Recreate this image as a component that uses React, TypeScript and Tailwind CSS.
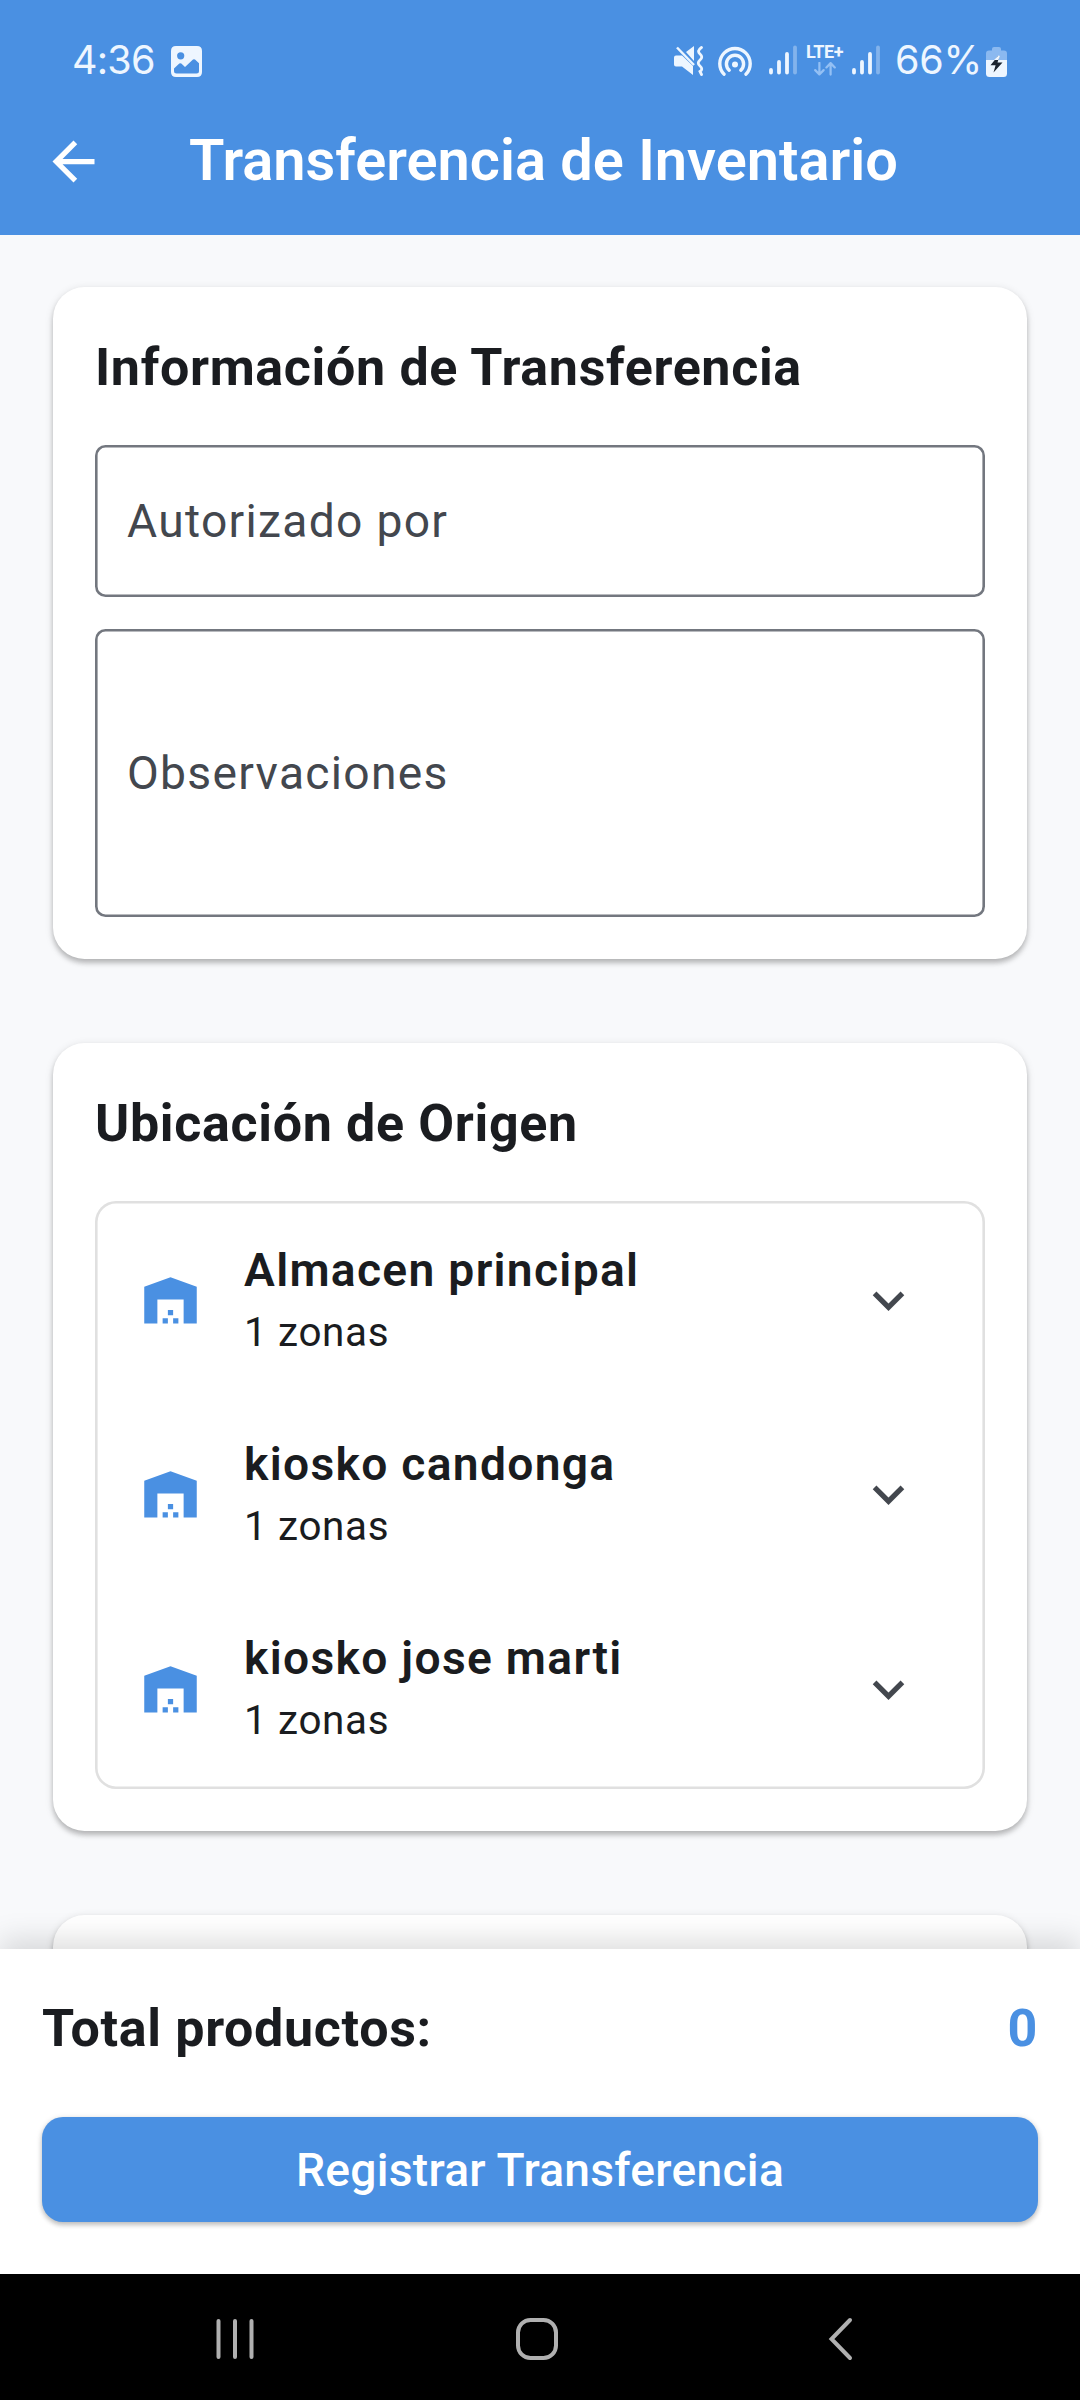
import type { ReactNode } from "react";

const locations = [
  { name: "Almacen principal", zones: "1 zonas" },
  { name: "kiosko candonga", zones: "1 zonas" },
  { name: "kiosko jose marti", zones: "1 zonas" },
];

function SignalBars() {
  return (
    <svg width="28" height="30" viewBox="0 0 28 30" stroke="#eef6ff" strokeWidth="3.8" strokeLinecap="round">
      <path d="M2 25v2.6M10 17v10.6M18 9v18.6" />
      <path d="M26 2.4v25.2" opacity="0.35" />
    </svg>
  );
}

function StatusBar() {
  return (
    <div className="flex h-[88px] items-center justify-between pt-8 pr-[73px] pl-[72px] font-['Inter',sans-serif] text-[39.5px] leading-none text-[#eef6ff]">
      <div className="flex items-center">
        <span className="w-[99px] pt-[2px] tracking-[-0.8px]">4:36</span>
        <svg className="mt-[3px]" width="31" height="31" viewBox="0 0 31 31">
          <path
            fillRule="evenodd"
            fill="#eef6ff"
            d="M5 0H26Q31 0 31 5V26Q31 31 26 31H5Q0 31 0 26V5Q0 0 5 0ZM9.7 6.2A3.6 3.6 0 1 0 9.7 13.4A3.6 3.6 0 1 0 9.7 6.2ZM3 22.5L8.3 17.6Q9.3 16.8 10.3 17.6L14 21L22 13.6Q23 12.7 24 13.6L28 17.2V25Q28 27.5 25.5 27.5H5.5Q3 27.5 3 25Z"
          />
        </svg>
      </div>
      <div className="flex items-center">
        <svg className="mt-[2px] mr-[14px]" width="30" height="30" viewBox="0 0 30 30">
          <path d="M2 9.5H8L19 20V29L8 20.5H2Q0 20.5 0 18.5V11.5Q0 9.5 2 9.5ZM12 6L20 0V15Z" fill="#eef6ff" />
          <path d="M3 1.5L20 19" stroke="#eef6ff" strokeWidth="2.5" />
          <path
            d="M27.5 1.5Q22.5 5 26 8Q29.5 11 26 14Q22.5 17 26 20Q29.5 23 26 25.5L27.5 28.5"
            fill="none"
            stroke="#eef6ff"
            strokeWidth="2.8"
            strokeLinecap="round"
          />
        </svg>
        <svg className="mt-[2px] mr-[17px]" width="34" height="31" viewBox="0 0 34 31" fill="none" stroke="#eef6ff" strokeWidth="3.4" strokeLinecap="round">
          <path d="M6 28.2A15.2 15.2 0 1 1 28 28.2" />
          <path d="M11.2 24.2A8.6 8.6 0 1 1 22.8 24.2" />
          <circle cx="17" cy="18.5" r="3" fill="#eef6ff" stroke="none" />
        </svg>
        <SignalBars />
        <div className="mx-[9px] flex h-8 w-[37px] flex-col items-center">
          <span className="font-['Roboto',sans-serif] text-[18px] leading-[16px] font-bold tracking-[-0.4px]">LTE+</span>
          <svg className="mt-[2px]" width="24" height="15" viewBox="0 0 24 15" fill="none" stroke="#94c0f4" strokeWidth="2.4" strokeLinecap="round" strokeLinejoin="round">
            <path d="M6 1V13M1.5 8.7L6 13.3L10.5 8.7M18 13.5V1.5M13.5 5.8L18 1.2L22.5 5.8" />
          </svg>
        </div>
        <SignalBars />
        <span className="ml-[15px] w-[89px] pt-[2px] whitespace-nowrap tracking-[-0.2px]">66%</span>
        <svg className="mt-[3px] ml-[2px]" width="21" height="30" viewBox="0 0 21 30">
          <path d="M6 2Q6 0 8 0H13Q15 0 15 2V3.5H18Q21 3.5 21 6.5V13H0V6.5Q0 3.5 3 3.5H6Z" fill="#8bb9f0" />
          <path d="M0 13H21V26.5Q21 30 17.5 30H3.5Q0 30 0 26.5Z" fill="#eef6ff" />
          <path d="M12 9L4.5 18.3H9.6L7.5 25.5L16.5 15.5H11.5L13.5 9Z" fill="#1b2430" />
          <path d="M12.5 8.6L8 13H12.3L14 9Z" fill="#eef6ff" />
        </svg>
      </div>
    </div>
  );
}

function Card({ title, children }: { title?: string; children?: ReactNode }) {
  return (
    <section className="rounded-[31.5px] bg-white px-[42px] pt-[44px] pb-[42px] shadow-[0_4px_5px_rgba(0,0,0,0.2),0_2px_9px_rgba(0,0,0,0.13)]">
      {title && <h2 className="text-[52px] leading-[74px] font-bold tracking-[0.66px] text-[#1a1c20]">{title}</h2>}
      {children}
    </section>
  );
}

function Field({ label, className }: { label: string; className: string }) {
  return (
    <div className={`flex items-center rounded-[10.5px] px-[32px] pt-[2px] text-[46.2px] tracking-[1.3px] text-[#43474e] shadow-[inset_0_0_0_2.6px_#73777f] ${className}`}>
      {label}
    </div>
  );
}

function LocationRow({ name, zones }: { name: string; zones: string }) {
  return (
    <div className="flex h-[194.25px] items-center pr-[65px] pl-[44px] text-[#1a1c20]">
      <svg className="size-[63px]" viewBox="0 0 24 24" fill="#4a90e2">
        <path d="M22 20.8V6.8L12 3.1L2 6.8V20.8H7V11.6H17V20.8Z" />
        <path d="M9 18.8h2v2H9zM13 18.8h2v2h-2zM11 15.6h2v2h-2z" />
      </svg>
      <div className="ml-[42px] flex-1 pb-[2px]">
        <div className="text-[46.2px] leading-[66px] font-semibold tracking-[1.3px]">{name}</div>
        <div className="text-[40.4px] leading-[60px] tracking-[0.66px]">{zones}</div>
      </div>
      <svg className="size-[63px]" viewBox="0 0 24 24" fill="#43474e">
        <path d="M16.59 8.59L12 13.17L7.41 8.59L6 10l6 6l6-6z" />
      </svg>
    </div>
  );
}

export default function App() {
  return (
    <div className="flex h-[2400px] w-[1080px] flex-col overflow-hidden bg-[#f8f9fb] font-['Roboto',sans-serif]">
      <header className="h-[235px] shrink-0 bg-[#4a90e2] text-white">
        <StatusBar />
        <div className="flex h-[147px] items-center pl-[42px]">
          <svg className="size-[63px]" viewBox="0 0 24 24" fill="#fff">
            <path d="M20 11H7.83l5.59-5.59L12 4l-8 8l8 8l1.41-1.41L7.83 13H20z" />
          </svg>
          <h1 className="ml-[84px] pb-[2px] text-[57.75px] font-semibold">Transferencia de Inventario</h1>
        </div>
      </header>

      <main className="flex min-h-0 flex-1 flex-col gap-[84px] overflow-hidden px-[53px] pt-[52px]">
        <div className="h-[672px] shrink-0">
          <Card title="Información de Transferencia">
            <Field label="Autorizado por" className="mt-[40px] h-[152px]" />
            <Field label="Observaciones" className="mt-[32px] h-[288px]" />
          </Card>
        </div>
        <div className="h-[788px] shrink-0">
          <Card title="Ubicación de Origen">
            <div className="mt-[40px] rounded-[21px] py-[2.6px] shadow-[inset_0_0_0_2.6px_#e0e0e0]">
              {locations.map((l) => (
                <LocationRow key={l.name} name={l.name} zones={l.zones} />
              ))}
            </div>
          </Card>
        </div>
        <Card>
          <div className="h-[200px]" />
        </Card>
      </main>

      <footer className="relative h-[325.5px] shrink-0 bg-white px-[42px] pt-[43px] shadow-[0_-10px_27px_rgba(0,0,0,0.13)]">
        <div className="flex items-center justify-between text-[52px] leading-[74px] font-bold tracking-[0.66px] text-[#1a1c20]">
          <span>Total productos:</span>
          <span className="text-[#4a90e2]">0</span>
        </div>
        <button className="mt-[51px] flex h-[105px] w-full items-center justify-center rounded-[21px] bg-[#4a90e2] pt-[3px] text-[46.2px] font-medium tracking-[0.26px] text-white shadow-[0_3px_5px_rgba(0,0,0,0.2),0_1px_6px_rgba(0,0,0,0.12)]">
          Registrar Transferencia
        </button>
      </footer>

      <nav className="relative h-[126px] shrink-0 bg-black pt-[43px]">
        <div className="flex items-center pl-[215px]">
          <svg width="40" height="44" viewBox="0 0 40 44" stroke="#b0b0b0" strokeWidth="4" strokeLinecap="round">
            <path d="M3.5 4V40M20 4V40M36.5 4V40" />
          </svg>
          <svg className="ml-[260px]" width="44" height="44" viewBox="0 0 44 44" fill="none" stroke="#b0b0b0" strokeWidth="4">
            <rect x="3" y="3" width="38" height="38" rx="12.5" />
          </svg>
          <svg className="ml-[268px]" width="28" height="44" viewBox="0 0 28 44" fill="none" stroke="#b0b0b0" strokeWidth="4" strokeLinecap="round">
            <path d="M23 3L4.5 22L23 41" />
          </svg>
        </div>
      </nav>
    </div>
  );
}
